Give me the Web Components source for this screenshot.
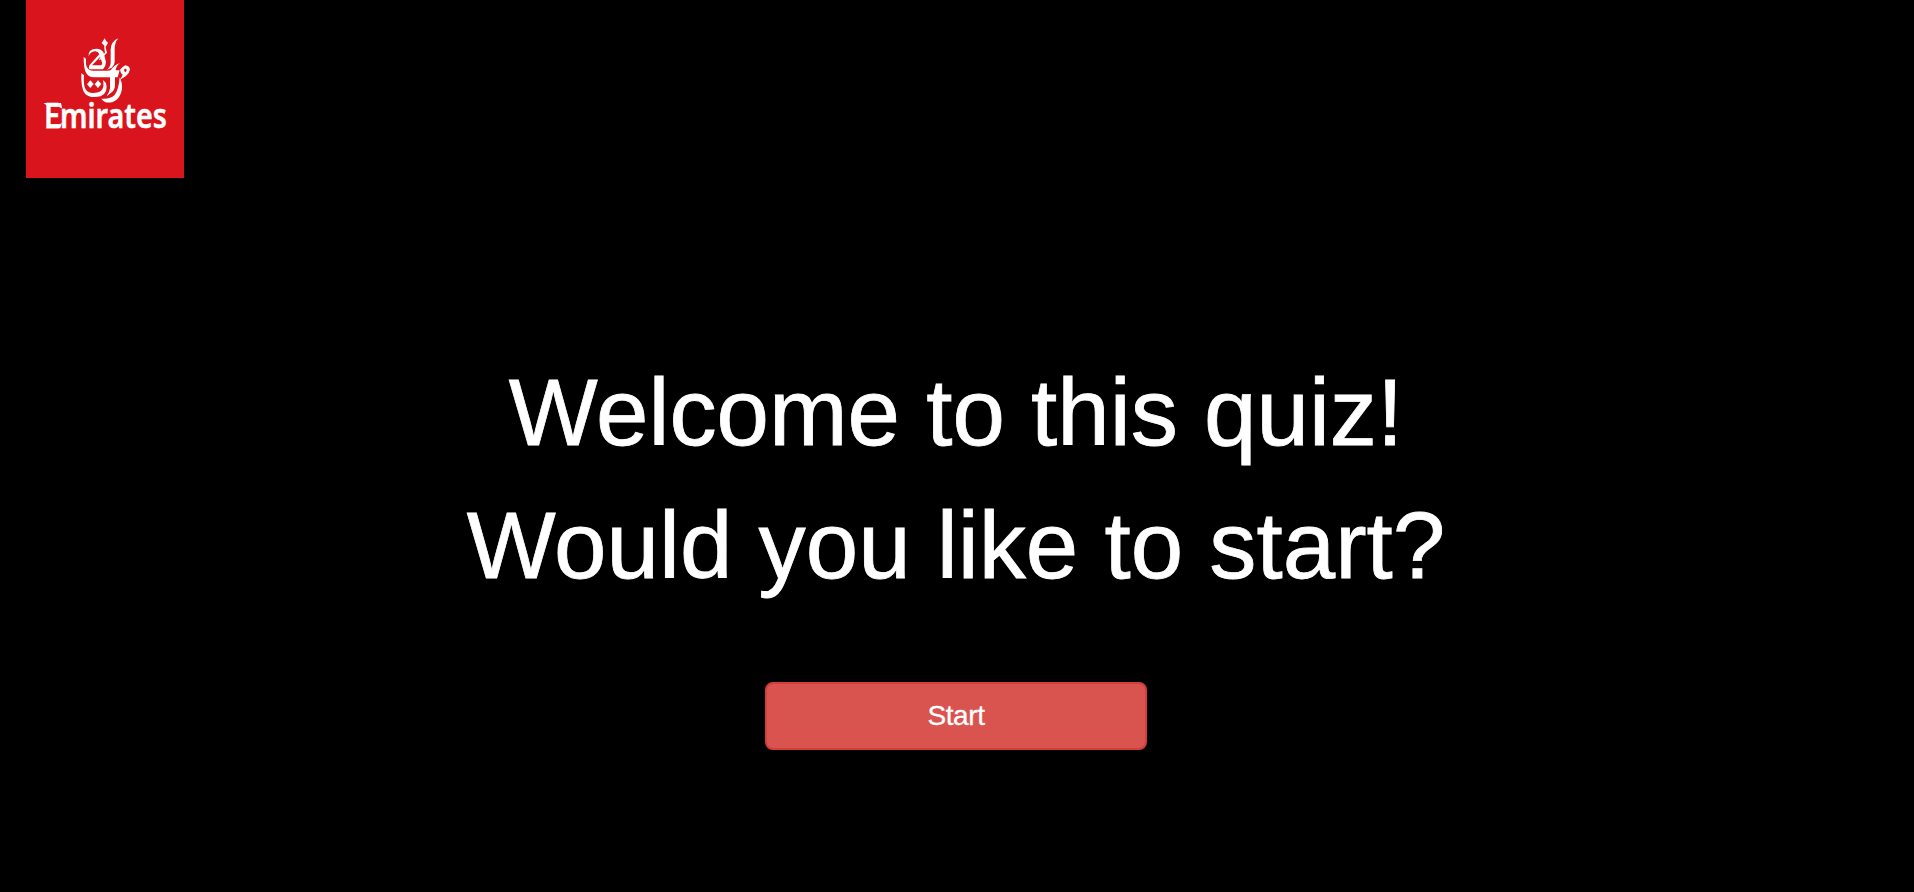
<!DOCTYPE html>
<html lang="en"><head><meta charset="utf-8"><title>Quiz</title>
<style>html,body{margin:0;height:100%;background:#000;overflow:hidden}body{font-family:"Liberation Sans",Arial,sans-serif;color:#fff}</style></head>
<body><quiz-page><brand-logo slot="logo"></brand-logo><quiz-heading><span>Welcome to this quiz!</span><span>Would you like to start?</span></quiz-heading><start-button>Start</start-button></quiz-page>
<script>
const define=(name,html)=>customElements.define(name,class extends HTMLElement{constructor(){super();this.attachShadow({mode:'open'}).innerHTML=html}});
define('quiz-page',`<style>:host{display:flex;flex-direction:column;height:892px;background:#000}header{height:178px;padding-left:26px}main{display:flex;flex-direction:column;align-items:center;padding-top:168px;padding-right:2px}</style><header><slot name="logo"></slot></header><main><slot></slot></main>`);
define('brand-logo',`<style>:host{display:block;width:158px;height:178px;background:#d9141c}svg{display:block}text{font-family:"Noto Sans",sans-serif;font-weight:600;fill:#fff;stroke:#fff;stroke-width:.5}</style>
<svg width="158" height="178" viewBox="26 0 158 178" role="img" aria-label="Emirates"><g fill="#fff" transform="translate(16 0) scale(.33333)">
<path d="M266 115q3 9 10 13l-7 13-12-12z"/>
<path d="M307 115q-12 13-11 36v36q-1 9-9 16l-14 6q11-8 11-22v-38q1-25 23-34z"/>
<path d="M218 169q-3-23 24-23 14 0 21 12l7 28q0 12-9 22h-41q-4-9 4-17l26-28q-4-10-13-9-15 2-19 15zM252 171l-24 25h28q4-4 2-9z" fill-rule="evenodd"/>
<path d="M264 139h4l5 19-22 23-2-3 18-20z"/>
<path d="M203 170q4 5 7 6-1 21 4 27 5 9 18 9h43l9-1q10-16 28-22-12 9-13 22h12l-6 21h-8v24q0 14-10 21l-15 12q8-11 10-24v-33h-48q-18 0-25-16-6-13-6-46z"/>
<path d="M312 209q8-9 16-13 12 2 14 12-2 13-12 20l-20 13q8-11 10-17-7-5-8-15zm12 0q-1 5 5 8 5-6 2-10-4-2-7 2z" fill-rule="evenodd"/>
<path d="M311 232q9 17 7 34-4 31-28 40-23 6-34-10 27 2 39-10 13-14 16-54z"/>
<path d="M196 219q5 6 8 6-2 27 3 39 5 13 21 15 23 0 30-10 7-9 3-29l9 9q8 29-16 40-32 7-46-7-14-14-12-63z"/>
<path d="M223 241l10 11-10 12-10-11zM246 241l10 11-10 12-10-11z"/>
</g><g fill="#fff"><path d="M43.500 103H53v3.200q-4-.2-5.500-.2zM58 103h3l1.200 5.500-4-2zM58 124.500l4-1.200-1.800 5h-15z"/></g><text transform="translate(43.900 128) scale(.82 1)" font-size="35">Emirates</text></svg>`);
define('quiz-heading',`<style>:host{display:flex;flex-direction:column;align-items:center;font-size:94.300px;letter-spacing:0;line-height:133px;white-space:nowrap;-webkit-text-stroke:.8px #fff}</style><slot></slot>`);
define('start-button',`<style>:host{display:block;margin-top:70px}button{display:block;box-sizing:border-box;width:382px;height:68px;border:2px solid #d43f3a;border-radius:8px;background:#d9534f;color:#fff;font:28px "Liberation Sans",Arial,sans-serif;letter-spacing:-.4px;-webkit-text-stroke:.3px #fff;padding:0}</style><button><slot></slot></button>`);
</script></body></html>
